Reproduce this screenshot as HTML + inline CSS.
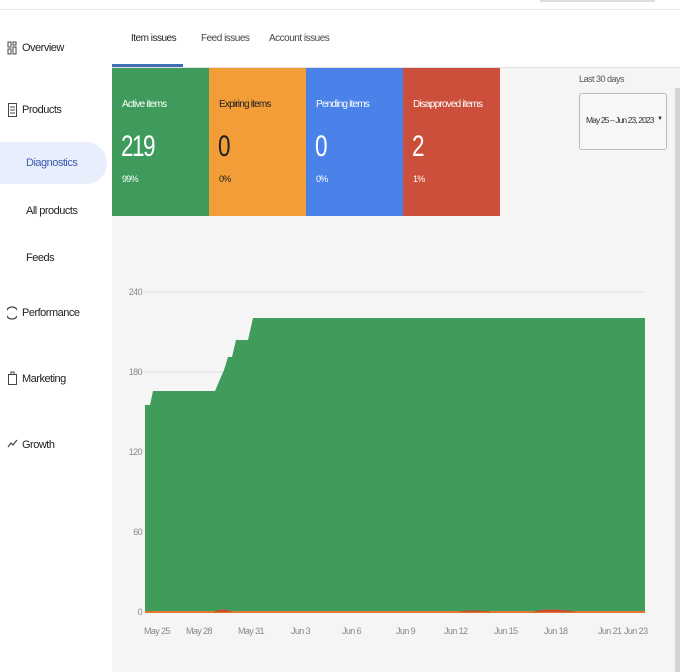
<!DOCTYPE html>
<html><head><style>
*{margin:0;padding:0;box-sizing:border-box}
body{width:680px;height:672px;background:#fff;font-family:"Liberation Sans Narrow","Liberation Sans",sans-serif;position:relative;overflow:hidden;color:#333}
.a{position:absolute;white-space:nowrap}
.nav{font-size:11px;letter-spacing:-0.5px;color:#222}
.card{position:absolute;top:68px;height:148px;width:97px;color:#fff}
.card .l{position:absolute;left:10px;top:31px;font-size:10px;letter-spacing:-.8px}
.card .n{position:absolute;left:9px;top:62px;font-size:30px;letter-spacing:-2px;transform:scaleX(.75);transform-origin:left}
.card .p{position:absolute;left:10px;top:106px;font-size:9px;letter-spacing:-.7px}
.ax{font-size:9px;color:#888;letter-spacing:-.6px}
.yl{position:absolute;width:30px;left:112px;text-align:right;font-size:9px;color:#888;letter-spacing:-.6px}
</style></head><body>
<div class="a" style="left:0;top:9px;width:680px;height:1px;background:#e6e6e6"></div>
<div class="a" style="left:540px;top:0;width:115px;height:2px;background:#ddd"></div>
<div class="a" style="left:112px;top:67px;width:568px;height:605px;background:#f5f5f5"></div>
<div class="a" style="left:0;top:142px;width:107px;height:42px;background:#e8eefb;border-radius:0 21px 21px 0"></div>
<svg class="a" style="left:7px;top:41px" width="10" height="14"><rect x="1" y="1" width="3" height="5" fill="none" stroke="#444"/><rect x="6" y="1" width="3" height="3" fill="none" stroke="#444"/><rect x="1" y="8" width="3" height="5" fill="none" stroke="#444"/><rect x="6" y="6" width="3" height="7" fill="none" stroke="#444"/></svg>
<div class="a nav" style="left:22px;top:42px">Overview</div>
<svg class="a" style="left:8px;top:103px" width="9" height="14"><rect x="0.5" y="0.5" width="8" height="13" fill="none" stroke="#444"/><path d="M2 4h5M2 7h5M2 10h5" stroke="#444"/></svg>
<div class="a nav" style="left:22px;top:104px">Products</div>
<div class="a nav" style="left:26px;top:157px;color:#3a5bb0">Diagnostics</div>
<div class="a nav" style="left:26px;top:205px">All products</div>
<div class="a nav" style="left:26px;top:252px">Feeds</div>
<svg class="a" style="left:7px;top:306px" width="10" height="14"><path d="M5 1a6 6 0 1 0 0.1 0" fill="none" stroke="#444" stroke-width="1.3"/></svg>
<div class="a nav" style="left:22px;top:307px">Performance</div>
<svg class="a" style="left:8px;top:371px" width="9" height="14"><rect x="0.5" y="3.5" width="8" height="10" fill="none" stroke="#444"/><path d="M3 3V1h3v2" fill="none" stroke="#444"/></svg>
<div class="a nav" style="left:22px;top:373px">Marketing</div>
<svg class="a" style="left:7px;top:438px" width="11" height="12"><path d="M1 9l3-4 2 2 4-5" fill="none" stroke="#444" stroke-width="1.2"/></svg>
<div class="a nav" style="left:22px;top:439px">Growth</div>
<div class="a nav" style="left:131px;top:33px;font-size:10px">Item issues</div>
<div class="a nav" style="left:201px;top:33px;color:#444;font-size:10px">Feed issues</div>
<div class="a nav" style="left:269px;top:33px;color:#444;font-size:10px">Account issues</div>
<div class="a" style="left:112px;top:64px;width:71px;height:3px;background:#3f6fb5"></div>
<div class="a" style="left:112px;top:67px;width:568px;height:1px;background:#e2e2e2"></div>
<div class="card" style="left:112px;background:#3f9b5b"><div class="l">Active items</div><div class="n">219</div><div class="p">99%</div></div>
<div class="card" style="left:209px;background:#f29d38;color:#222"><div class="l">Expiring items</div><div class="n">0</div><div class="p">0%</div></div>
<div class="card" style="left:306px;background:#4b82ea"><div class="l">Pending items</div><div class="n">0</div><div class="p">0%</div></div>
<div class="card" style="left:403px;background:#cb4f3b"><div class="l">Disapproved items</div><div class="n">2</div><div class="p">1%</div></div>
<div class="a nav" style="left:579px;top:74px;font-size:9px;color:#555">Last 30 days</div>
<div class="a" style="left:579px;top:93px;width:88px;height:57px;border:1px solid #bbb;border-radius:3px;background:#f7f7f7"></div>
<div class="a nav" style="left:586px;top:115px;font-size:8.5px;letter-spacing:-.9px;color:#333">May 25 – Jun 23, 2023</div>
<div class="a" style="left:657px;top:116px;font-size:6px;color:#333">▼</div>
<div class="a" style="left:675px;top:88px;width:5px;height:584px;background:#d4d4d4"></div>
<svg class="a" style="left:0;top:0" width="680" height="672">
<g stroke="#ddd" stroke-width="1"><path d="M145 292H645M145 372H645M145 452H645M145 532H645"/></g>
<path d="M145 612V405H150L153 391H215L224 370L228 357L232 357L236 340H248L253 318H645V612Z" fill="#409c5b"/>
<path d="M145 611H645V613H145Z" fill="#e0782e"/>
<path d="M215 612q8-4 16 0M535 612q12-4 40 0M460 612q10-2 30 0" fill="#d04a2c" stroke="#d04a2c"/>
</svg>
<div class="yl" style="top:287px">240</div>
<div class="yl" style="top:367px">180</div>
<div class="yl" style="top:447px">120</div>
<div class="yl" style="top:527px">60</div>
<div class="yl" style="top:607px">0</div>
<div class="a ax" style="left:144px;top:626px">May 25</div>
<div class="a ax" style="left:186px;top:626px">May 28</div>
<div class="a ax" style="left:238px;top:626px">May 31</div>
<div class="a ax" style="left:291px;top:626px">Jun 3</div>
<div class="a ax" style="left:342px;top:626px">Jun 6</div>
<div class="a ax" style="left:396px;top:626px">Jun 9</div>
<div class="a ax" style="left:444px;top:626px">Jun 12</div>
<div class="a ax" style="left:494px;top:626px">Jun 15</div>
<div class="a ax" style="left:544px;top:626px">Jun 18</div>
<div class="a ax" style="left:598px;top:626px">Jun 21</div>
<div class="a ax" style="left:624px;top:626px">Jun 23</div>
</body></html>
